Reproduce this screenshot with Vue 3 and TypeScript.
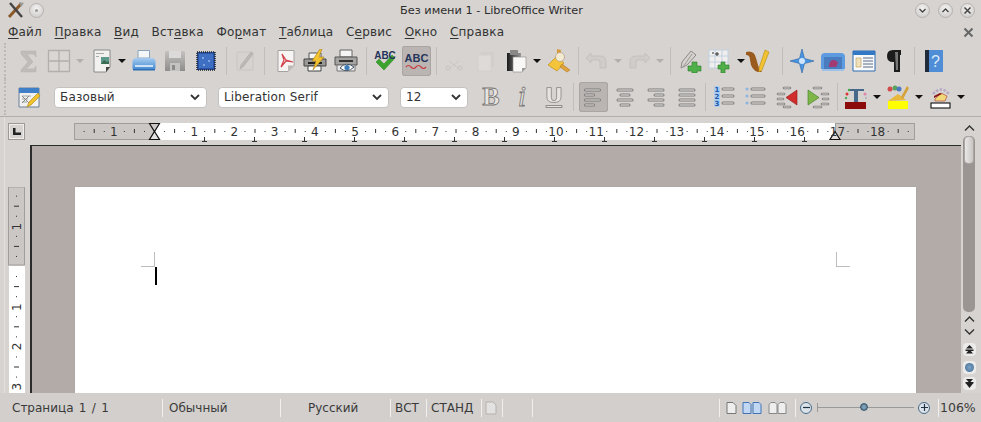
<script setup lang="ts">
interface Item { k: string; c: number; w?: number; n?: string; t?: string; active?: boolean; off?: boolean }
interface Label { x: number; y: number; t: string; c: string }

const icon = (n: string, c: number, extra: Partial<Item> = {}): Item => ({ k: 'icon', n, c, w: 24, ...extra })
const caret = (c: number, off = false): Item => ({ k: 'caret', c, w: 8, off })
const sep = (c: number): Item => ({ k: 'sep', c, w: 1 })
const grip: Item = { k: 'grip', c: 5, w: 3 }

function place(list: Item[]) {
  let right = 0
  return list.map((it) => {
    const w = it.w ?? 24
    const left = it.c - w / 2
    const style = { width: w + 'px', marginLeft: left - right + 'px' }
    right = left + w
    return { ...it, style }
  })
}

const rows = [
  place([
    grip, icon('sigma', 29), icon('table', 59), caret(80, true), icon('doc', 102), caret(122),
    icon('print', 144), icon('save', 175), icon('frame', 206), sep(226), icon('pencil', 245), sep(264),
    icon('pdf', 286), icon('direct', 315), icon('preview', 346), sep(366), icon('spell', 385),
    icon('auto', 416.5, { w: 29, active: true }), sep(436), icon('cut', 454), icon('copy', 486), icon('paste', 517), caret(537),
    icon('brush', 559), sep(578), icon('undo', 596), caret(618, true), icon('redo', 640), caret(660, true), sep(670),
    icon('draw', 690), icon('addtable', 720), caret(741), icon('pen', 758), sep(782), icon('star', 802),
    icon('gallery', 833), icon('data', 864), icon('para', 895), sep(914), icon('help', 934),
  ]),
  place([
    grip, icon('styles', 29),
    { k: 'select', c: 130.5, w: 153, t: 'Базовый' },
    { k: 'select', c: 303.5, w: 171, t: 'Liberation Serif' },
    { k: 'select', c: 434, w: 68, t: '12' },
    icon('bold', 491), icon('italic', 522), icon('under', 554), sep(573),
    icon('left', 593.5, { w: 29, active: true }), icon('center', 625), icon('right', 656), icon('just', 686.5), sep(705),
    icon('num', 724), icon('bul', 755), icon('outdent', 787), icon('indent', 818), sep(837),
    icon('fcolor', 856), caret(877), icon('hl', 898), caret(919), icon('bg', 941), caret(961),
  ]),
]

const iconText: Record<string, Label[]> = {
  spell: [{ x: 12, y: 10, t: 'ABC', c: 'tx-abc' }],
  auto: [{ x: 14.5, y: 13, t: 'ABC', c: 'tx-abc2' }],
  help: [{ x: 13.5, y: 18, t: '?', c: 'tx-q' }],
  bold: [{ x: 12, y: 20, t: 'B', c: 'tx-b' }],
  italic: [{ x: 12, y: 21, t: 'i', c: 'tx-i' }],
  num: [
    { x: 5, y: 7, t: '1', c: 'tx-n' }, { x: 5, y: 14, t: '2', c: 'tx-n' }, { x: 5, y: 21, t: '3', c: 'tx-n' },
  ],
}

const menus = [
  ['', 'Ф', 'айл'], ['', 'П', 'равка'], ['', 'В', 'ид'], ['Вст', 'а', 'вка'], ['Фо', 'р', 'мат'],
  ['', 'Т', 'аблица'], ['С', 'е', 'рвис'], ['', 'О', 'кно'], ['', 'С', 'правка'],
]

const cm = 40.2
const zero = 80
const hLabels: { x: number; t: string }[] = [{ x: zero - cm, t: '1' }]
for (let i = 1; i <= 18; i++) hLabels.push({ x: zero + i * cm, t: String(i) })
const hDots: { x: number; long: boolean }[] = []
for (let i = -2; i <= 19; i++) {
  for (const f of [0.25, 0.5, 0.75]) {
    const x = zero + (i + f) * cm
    if (x > 3 && x < 836) hDots.push({ x, long: f === 0.5 })
  }
}
const tabs: number[] = []
for (let x = zero + 50; x < 740; x += 50) tabs.push(x)

const vZero = 79
const vLabels = [
  { y: vZero - cm + 1, t: '1' }, { y: vZero + cm + 1, t: '1' }, { y: vZero + 2 * cm, t: '2' }, { y: vZero + 3 * cm, t: '3' },
]
const vDots: { y: number; long: boolean }[] = []
for (let i = -2; i <= 3; i++) {
  for (const f of [0.25, 0.5, 0.75]) {
    const y = vZero + (i + f) * cm
    if (y > 3 && y < 206) vDots.push({ y, long: f === 0.5 })
  }
}

const cells = [
  { w: 163, t: 'Страница 1 / 1', cls: 'pl12' },
  { w: 118, t: 'Обычный', cls: 'pl6' },
  { w: 110, t: 'Русский', cls: 'pl27' },
  { w: 36, t: 'ВСТ', cls: 'pl4' },
  { w: 55, t: 'СТАНД', cls: 'pl4' },
]
const cellStyle = (w: number) => ({ width: w + 'px' })
</script>

<template>
  <div class="win">
    <svg class="defs" width="0" height="0" aria-hidden="true">
      <defs>
        <linearGradient id="gBlue" x1="0" y1="0" x2="0" y2="1"><stop offset="0" stop-color="#a8cdf0"/><stop offset="1" stop-color="#3f86d0"/></linearGradient>
        <linearGradient id="gGray" x1="0" y1="0" x2="0" y2="1"><stop offset="0" stop-color="#c4c1bf"/><stop offset="1" stop-color="#8f8d8c"/></linearGradient>
        <linearGradient id="gDark" x1="0" y1="0" x2="1" y2="0"><stop offset="0" stop-color="#1a1a1a"/><stop offset="1" stop-color="#9a9a9a"/></linearGradient>
      </defs>
      <symbol id="sigma" viewBox="0 0 24 24"><path d="M4 2h15v6l-2-3H10l6 8-7 7h8l2-3v6H4v-2l7-8-7-8z" fill="#c0bcba" stroke="#b5b1ae" stroke-width=".5"/></symbol>
      <symbol id="table" viewBox="0 0 24 24"><path d="M1.500 1.500h21v21h-21zM12 1.500v21M1.500 12h21" fill="#d9d6d4" stroke="#b2afad" stroke-width="1.300"/></symbol>
      <symbol id="doc" viewBox="0 0 24 24"><path d="M4 1h16v17l-4 5H4z" fill="#f2f1f0" stroke="#777" stroke-width=".8"/><path d="M16 23v-5h4z" fill="#444"/><path d="M6 4h8v1H6zM6 7h3v1H6z" fill="#aaa"/><rect x="11" y="8" width="8" height="7" fill="#5d9a8c"/><path d="M11 15l3-4 3 2 2-1v3z" fill="#3b6a52"/></symbol>
      <symbol id="print" viewBox="0 0 24 24"><path d="M6 9V1.500h11.500V9z" fill="#f5f6f8" stroke="#8aa3bd"/><path d="M0.500 13q0-4 4-4h15q4 0 4 4v6q0 2-2 2h-19q-2 0-2-2z" fill="url(#gBlue)"/><path d="M3 16h18v2H3z" fill="#cfe2f5"/><path d="M1 20h22v1.500H1z" fill="#2e6db0"/></symbol>
      <symbol id="save" viewBox="0 0 24 24"><path d="M3 2h18l1 1v19H2V3z" fill="url(#gGray)"/><path d="M6 2h12v7H6z" fill="#dcdad8"/><path d="M7 14h10v8H7z" fill="#c5c3c1"/><path d="M9 16h3v5H9z" fill="#8d8b8a"/></symbol>
      <symbol id="frame" viewBox="0 0 24 24"><rect x="3" y="3" width="18" height="18" fill="#2b54a5" stroke="#222" stroke-dasharray="1 1" stroke-width="1.500"/><path d="M5 5h14v14H5z" fill="#3e6fc2"/><path d="M9 8l1 1-1 1-1-1zM15 11l1 1-1 1-1-1zM10 15l1 1-1 1-1-1z" fill="#bcd4f2"/></symbol>
      <symbol id="pencil" viewBox="0 0 24 24"><path d="M4 3h16v18H4z" fill="#d5d2d0" stroke="#c9c6c4"/><path d="M7 20l1-4L18 3l2 2L10 18z" fill="#bcb8b6" stroke="#aeaaa8" stroke-width=".6"/></symbol>
      <symbol id="pdf" viewBox="0 0 24 24"><path d="M4 1.500h16v15l-6 6H4z" fill="#f7f5f4" stroke="#a5a2a0"/><path d="M14 22.500v-6h6z" fill="#bcb9b7"/><path d="M8 5l2 6-3 7 5-6 7 1-7-2z" fill="none" stroke="#d2404a" stroke-width="1.200"/></symbol>
      <symbol id="direct" viewBox="0 0 24 24"><path d="M6 4h12v6H6z" fill="#f5f5f5" stroke="#555"/><path d="M1 10h22v7H1z" fill="#9a9896" stroke="#444"/><path d="M5 13h14v2H5z" fill="#222"/><path d="M5 17h13v5H5z" fill="#fff" stroke="#444"/><path d="M17 0L9 12h4l-3 9 11-13h-5l3-8z" fill="#f4c430" stroke="#a97a10" stroke-width=".6"/></symbol>
      <symbol id="preview" viewBox="0 0 24 24"><path d="M6 1h12v7H6z" fill="#f5f5f5" stroke="#666"/><path d="M1 8h22v8H1z" fill="#a5a3a1" stroke="#555"/><path d="M5 11h14v2H5z" fill="#333"/><path d="M3 16h18v6H3z" fill="#e9e9e9" stroke="#777"/><path d="M6 19q6-7 14-1-7 7-14 1z" fill="#fff" stroke="#456"/><circle cx="13" cy="18.500" r="2.600" fill="#3d7cb5"/></symbol>
      <symbol id="spell" viewBox="0 0 24 24"><path d="M3 13l3-3 5 5 8-9 3 3-11 12z" fill="#3da32f" stroke="#1f7a18" stroke-width=".5"/></symbol>
      <symbol id="auto" viewBox="0 0 29 24"><path d="M4 18q2.500-3 5 0t5 0 5 0 5 0" fill="none" stroke="#c8373c" stroke-width="1.200"/></symbol>
      <symbol id="cut" viewBox="0 0 24 24"><path d="M7 12l9 7M17 12l-9 7" stroke="#cac7c5" fill="none"/><circle cx="6" cy="19" r="2" fill="none" stroke="#c6c3c1"/><circle cx="18" cy="19" r="2" fill="none" stroke="#c6c3c1"/></symbol>
      <symbol id="copy" viewBox="0 0 24 24"><path d="M7 3h13v15H7z" fill="#d1cfcd"/><path d="M4 6h13v16H4z" fill="#dddad8" stroke="#d3d0ce"/></symbol>
      <symbol id="paste" viewBox="0 0 24 24"><path d="M2 4h14v18H2z" fill="url(#gDark)"/><path d="M5 1h8v5H5z" fill="#8a8886"/><path d="M8 8h13v11l-4 4H8z" fill="#f8f7f6" stroke="#8a8886" stroke-width=".6"/><path d="M17 23v-4h4z" fill="#9d9b99"/></symbol>
      <symbol id="brush" viewBox="0 0 24 24"><path d="M10 0l4 1-1 8-3-1z" fill="#d59a3a"/><path d="M1 16l8-8 8 6-7 8z" fill="#f4c43a" stroke="#c08f1a" stroke-width=".7"/><circle cx="13" cy="8" r="4.500" fill="#f3ead2" stroke="#a89070" stroke-width=".6"/><path d="M15 15l8 6-3 2-7-5z" fill="#e0a23a" stroke="#a87516" stroke-width=".5"/></symbol>
      <symbol id="undo" viewBox="0 0 24 24"><path d="M2 9l5-5v3h9q6 0 6 5v7h-6v-6q0-2-2-2H7v3z" fill="#cfccca" stroke="#bdbab8" stroke-width=".7"/></symbol>
      <symbol id="redo" viewBox="0 0 24 24"><path d="M22 9l-5-5v3H8q-6 0-6 5v7h6v-6q0-2 2-2h7v3z" fill="#cfccca" stroke="#bdbab8" stroke-width=".7"/></symbol>
      <symbol id="draw" viewBox="0 0 24 24"><path d="M3 19l1-6 9-11 5 4-9 10z" fill="#d5d2d0" stroke="#8c8987"/><path d="M5 18L14 5" stroke="#9a9795"/><path d="M14 13h5v4h4v5h-4v2h-5v-2h-4v-5h4z" fill="#4fb04a" stroke="#2a7a24" stroke-width=".6"/></symbol>
      <symbol id="addtable" viewBox="0 0 24 24"><path d="M1 1h19v18H1z" fill="#f1efee"/><path d="M1 1h19v18H1zM7 1v18M14 1v18M1 7h19M1 13h19" fill="none" stroke="#c2d0e0"/><path d="M4 4h2M9 3v4M7 5h4" stroke="#333"/><path d="M13 13h4v3h4v4h-4v4h-4v-4h-3v-4h3z" fill="#4fb04a" stroke="#2a7a24" stroke-width=".6"/></symbol>
      <symbol id="pen" viewBox="0 0 24 24"><path d="M0 3q8-2 10 6 2 7 3 10l3 4h-4q-7-2-8-12Q4 6 0 6z" fill="#9a5c1e"/><path d="M13 19L19 1l4 2-7 18-3 2z" fill="#f1c232" stroke="#b68b14" stroke-width=".6"/></symbol>
      <symbol id="star" viewBox="0 0 24 24"><path d="M12 0l2.500 9.500L24 12l-9.500 2.500L12 24l-2.500-9.500L0 12l9.500-2.500z" fill="#4a94e0" stroke="#2a64a8" stroke-width=".6"/><circle cx="12" cy="12" r="3" fill="#cfe5fb"/></symbol>
      <symbol id="gallery" viewBox="0 0 24 24"><path d="M0 8q0-4 4-4h16q4 0 4 4v12H0z" fill="#5d9be0"/><rect x="3" y="8" width="18" height="13" fill="#4a7cc0"/><path d="M8 18q0-7 4-7t5 3l-2 4z" fill="#a23b74"/><path d="M1 20h22v2H1z" fill="#9cc2ea"/></symbol>
      <symbol id="data" viewBox="0 0 24 24"><path d="M1 2h22v20H1z" fill="#f7f9fb" stroke="#2f6ab0"/><path d="M1 2h22v4H1z" fill="#3378c4"/><path d="M4 9h5v9H4z" fill="#f0e0bc" stroke="#c09a50" stroke-width=".6"/><path d="M11 9h10M11 12h10M11 15h10M11 18h10" stroke="#5a6a80"/></symbol>
      <symbol id="para" viewBox="0 0 24 24"><path d="M18 1H10q-6 0-6 6t6 6h1v10h6V6h1z" fill="#1c1c1c"/><path d="M12 3h3v18h-2z" fill="#777"/></symbol>
      <symbol id="help" viewBox="0 0 24 24"><rect x="4" y="1" width="17" height="22" fill="#4f8ed6"/><rect x="3" y="1" width="4" height="22" fill="#1f2a3a"/></symbol>
      <symbol id="styles" viewBox="0 0 24 24"><path d="M2 3h20v19H2z" fill="#f1f0ef" stroke="#6a7f96"/><path d="M2 3h20v5H2z" fill="#3f7fc8"/><path d="M5 11h9M5 14h6M5 17h5" stroke="#9aa" /><path d="M5 11l7 7M12 11l-7 7" stroke="#888"/><path d="M10 22l2-5 9-9 2 3-9 9z" fill="#efc22e" stroke="#a8841a" stroke-width=".6"/></symbol>
      <symbol id="under" viewBox="0 0 24 24"><path d="M4 2h5v11q0 4 3 4t3-4V2h5v11q0 6-8 6t-8-6z" fill="#e6e3e1" stroke="#7a7876" stroke-width=".8" transform="translate(1.400 .8) scale(.88)"/><path d="M4 20.500h16v2H4z" fill="#e6e3e1" stroke="#6c6a68" stroke-width=".7"/></symbol>
      <symbol id="left" viewBox="0 0 29 24"><path d="M6.500 5h14M6.500 10h8M6.500 15h14M6.500 20h8" stroke="#7c7a78" stroke-width="3" stroke-linecap="round"/><path d="M6.500 5h14M6.500 10h8M6.500 15h14M6.500 20h8" stroke="#e4e2e0" stroke-width="1" stroke-linecap="round"/></symbol>
      <symbol id="center" viewBox="0 0 24 24"><path d="M5 5h14M8 10h8M5 15h14M8 20h8" stroke="#7c7a78" stroke-width="3" stroke-linecap="round"/><path d="M5 5h14M8 10h8M5 15h14M8 20h8" stroke="#ecebe9" stroke-width="1" stroke-linecap="round"/></symbol>
      <symbol id="right" viewBox="0 0 24 24"><path d="M5 5h14M11 10h8M5 15h14M11 20h8" stroke="#7c7a78" stroke-width="3" stroke-linecap="round"/><path d="M5 5h14M11 10h8M5 15h14M11 20h8" stroke="#ecebe9" stroke-width="1" stroke-linecap="round"/></symbol>
      <symbol id="just" viewBox="0 0 24 24"><path d="M5 5h14M5 10h14M5 15h14M5 20h14" stroke="#7c7a78" stroke-width="3" stroke-linecap="round"/><path d="M5 5h14M5 10h14M5 15h14M5 20h14" stroke="#ecebe9" stroke-width="1" stroke-linecap="round"/></symbol>
      <symbol id="num" viewBox="0 0 24 24"><rect x="2" y="1" width="6" height="21" rx="2" fill="#a9cbef"/><path d="M11 4h10M11 11h10M11 18h10" stroke="#7c7a78" stroke-width="3" stroke-linecap="round"/><path d="M11 4h10M11 11h10M11 18h10" stroke="#ecebe9" stroke-width="1" stroke-linecap="round"/></symbol>
      <symbol id="bul" viewBox="0 0 24 24"><circle cx="4" cy="4" r="1.600" fill="#8fb6de"/><circle cx="4" cy="11" r="1.600" fill="#8fb6de"/><circle cx="4" cy="18" r="1.600" fill="#8fb6de"/><path d="M9 4h12M9 11h12M9 18h12" stroke="#7c7a78" stroke-width="3" stroke-linecap="round"/><path d="M9 4h12M9 11h12M9 18h12" stroke="#ecebe9" stroke-width="1" stroke-linecap="round"/></symbol>
      <symbol id="outdent" viewBox="0 0 24 24"><path d="M9 3h6M3 9h6M3 14h5M3 19h6M9 22h6" stroke="#7c7a78" stroke-width="2.600" stroke-linecap="round"/><path d="M9 3h6M3 9h6M3 14h5M3 19h6M9 22h6" stroke="#ecebe9" stroke-width=".8" stroke-linecap="round"/><path d="M22 5v15L11 12.500z" fill="#d22d2d" stroke="#8e1a1a" stroke-width=".6"/></symbol>
      <symbol id="indent" viewBox="0 0 24 24"><path d="M8 3h7M16 9h6M17 14h5M16 19h6M8 22h7" stroke="#7c7a78" stroke-width="2.600" stroke-linecap="round"/><path d="M8 3h7M16 9h6M17 14h5M16 19h6M8 22h7" stroke="#ecebe9" stroke-width=".8" stroke-linecap="round"/><path d="M2 5v15l11-7.500z" fill="#7fb64a" stroke="#3d7a1c" stroke-width=".6"/></symbol>
      <symbol id="fcolor" viewBox="0 0 24 24"><path d="M4 4h16v2h-6v11h-4V6H4z" fill="#46688a"/><circle cx="3" cy="9" r="1.500" fill="#d33"/><circle cx="5" cy="5" r="1.200" fill="#4a4"/><circle cx="21" cy="9" r="1.500" fill="#d8a"/><circle cx="22" cy="13" r="1.200" fill="#bbb"/><circle cx="2" cy="13" r="1.200" fill="#5a5"/><rect x="1" y="17" width="21" height="7" fill="#8c0c0c"/></symbol>
      <symbol id="hl" viewBox="0 0 24 24"><circle cx="4" cy="4" r="2.500" fill="#d24a4a"/><circle cx="9" cy="3" r="2.500" fill="#5aa35a"/><circle cx="13" cy="4" r="2.500" fill="#4a7ac0"/><path d="M2 16l10-7 8 6z" fill="#e7b83a"/><path d="M15 12l6-11 2 2-6 11z" fill="#d4a23a"/><rect x="2" y="16" width="20" height="8" fill="#ffff00"/></symbol>
      <symbol id="bg" viewBox="0 0 24 24"><path d="M4 9q8-9 16 0" fill="none" stroke="#b8a8c8" stroke-width="2.500" stroke-dasharray="2.500 1.500"/><path d="M6 14l6-6 6 3-2 5H6z" fill="#f1d878" stroke="#a33" stroke-width=".6"/><path d="M5 11l6-3 2 1-8 4z" fill="#8c1414"/><rect x="2" y="18" width="19" height="5" fill="#fff" stroke="#111" stroke-width="1.100"/></symbol>
    </svg>

    <header class="title">
      <svg class="logo" width="20" height="20" viewBox="0 0 20 20"><path d="M3 17L15 4" stroke="#8a5a2a" stroke-width="3"/><path d="M4 3l12 14" stroke="#444" stroke-width="2.400"/><path d="M13 2l5 1-3 4z" fill="#999"/></svg>
      <span class="round pin"><i class="dot"></i></span>
      <span class="title-text">Без имени 1 - LibreOffice Writer</span>
      <span class="round r1"><svg width="9" height="9" viewBox="0 0 9 9"><path d="M1.500 3l3 3 3-3" fill="none" stroke="#444" stroke-width="1.300"/></svg></span>
      <span class="round r2"><svg width="9" height="9" viewBox="0 0 9 9"><path d="M1.500 6l3-3 3 3" fill="none" stroke="#444" stroke-width="1.300"/></svg></span>
      <span class="round r3"><svg width="9" height="9" viewBox="0 0 9 9"><path d="M1.500 1.500l6 6M7.500 1.500l-6 6" fill="none" stroke="#444" stroke-width="1.500"/></svg></span>
    </header>

    <nav class="menu">
      <span v-for="(m, i) in menus" :key="i" class="mi">{{ m[0] }}<u>{{ m[1] }}</u>{{ m[2] }}</span>
      <svg class="close" width="11" height="11" viewBox="0 0 11 11"><path d="M1.500 1.500l8 8M9.500 1.500l-8 8" stroke="#666" stroke-width="2"/></svg>
    </nav>

    <div v-for="(row, ri) in rows" :key="ri" :class="['toolbar', 't' + (ri + 1)]">
      <span v-for="(it, i) in row" :key="i" :class="['item', it.k, { active: it.active, off: it.off }]" :style="it.style">
        <svg v-if="it.k === 'icon'" class="ic" :width="it.w" height="24">
          <use :href="'#' + it.n" />
          <text v-for="(l, li) in iconText[it.n ?? ''] ?? []" :key="li" :x="l.x" :y="l.y" text-anchor="middle" :class="l.c">{{ l.t }}</text>
        </svg>
        <template v-if="it.k === 'select'">
          <span class="sel-text">{{ it.t }}</span>
          <svg class="chev" width="10" height="7" viewBox="0 0 10 7"><path d="M1 1l4 4 4-4" fill="none" stroke="#333" stroke-width="1.800"/></svg>
        </template>
      </span>
    </div>

    <main class="work">
      <aside class="left">
        <div class="corner"><svg width="8" height="7" viewBox="0 0 8 7"><path d="M0 0h2.500v4.500H8V7H0z" fill="#222"/></svg></div>
        <svg class="vruler" width="17" height="206" font-family="DejaVu Sans" font-size="12" fill="#333">
          <rect x=".5" y="0" width="16" height="78" fill="#cbc7c5" stroke="#a09d9b"/>
          <rect x="1" y="79" width="16" height="127" fill="#fff"/>
          <g v-for="(d, i) in vDots" :key="i">
            <rect :x="d.long ? 6 : 8" :y="d.y" :width="d.long ? 5 : 1" height="1" fill="#333"/>
          </g>
          <text v-for="(l, i) in vLabels" :key="i" text-anchor="middle" :transform="`translate(13 ${l.y}) rotate(-90)`">{{ l.t }}</text>
        </svg>
      </aside>
      <section class="center">
        <div class="hwrap">
          <svg class="hruler" width="841" height="20" font-family="DejaVu Sans" font-size="12" fill="#333">
            <rect x=".5" y=".5" width="80" height="16" fill="#cbc7c5" stroke="#a09d9b"/>
            <rect x="81" y="0" width="680" height="17" fill="#fff"/>
            <rect x="761.500" y=".5" width="79" height="16" fill="#cbc7c5" stroke="#a09d9b"/>
            <path d="M761 8.500l5 8h-10z" fill="#e4e1df" stroke="#111" stroke-width="1.200"/>
            <rect v-for="(d, i) in hDots" :key="'d' + i" :x="d.x" :y="d.long ? 6 : 8" width="1" :height="d.long ? 4 : 1" fill="#333"/>
            <text v-for="l in hLabels" :key="l.x" :x="l.x" y="13" text-anchor="middle">{{ l.t }}</text>
            <path v-for="x in tabs" :key="'t' + x" :d="`M${x + 0.5} 14v4M${x - 2} 18.500h5`" stroke="#333" fill="none"/>
            <path d="M75.500 .5h10L80.500 8.500z" fill="#cbc7c5" stroke="#111" stroke-width="1.200"/>
            <path d="M80.500 8.500l5 8h-10z" fill="#e4e1df" stroke="#111" stroke-width="1.200"/>
          </svg>
        </div>
        <div class="doc">
          <div class="page">
            <i class="crop c1v"></i><i class="crop c1h"></i>
            <i class="crop c2v"></i><i class="crop c2h"></i>
            <i class="cursor"></i>
          </div>
        </div>
      </section>
      <aside class="scroll">
        <svg class="sarrow first" width="11" height="8" viewBox="0 0 11 8"><path d="M1 6.500l4.500-4.500 4.500 4.500" fill="none" stroke="#333" stroke-width="1.400"/></svg>
        <div class="trough"><div class="thumb"></div></div>
        <svg class="sarrow up" width="11" height="8" viewBox="0 0 11 8"><path d="M1 6.500l4.500-4.500 4.500 4.500" fill="none" stroke="#333" stroke-width="1.400"/></svg>
        <svg class="sarrow down" width="11" height="8" viewBox="0 0 11 8"><path d="M1 1.500l4.500 4.500 4.500-4.500" fill="none" stroke="#333" stroke-width="1.400"/></svg>
        <span class="pill p1"><svg width="9" height="9" viewBox="0 0 9 9"><path d="M4.500 0l3.500 3.500H1zM.5 4.500h8V6h-8zM4.500 4.500l3.500 4H1z" fill="#222"/></svg></span>
        <span class="pill p2"><i class="ball"></i></span>
        <span class="pill p3"><svg width="9" height="9" viewBox="0 0 9 9"><path d="M1 0h7L4.500 4zM.5 3h8v1.500h-8zM1 4.500h7L4.500 9z" fill="#222"/></svg></span>
      </aside>
    </main>

    <footer class="status">
      <span v-for="c in cells" :key="c.t" :class="['cell', c.cls]" :style="cellStyle(c.w)">{{ c.t }}</span>
      <span class="cell c-doc">
        <svg width="12" height="14" viewBox="0 0 12 14"><path d="M1 1h7l3 3v9H1z" fill="#e4e2e0" stroke="#b5b2b0"/></svg>
      </span>
      <span class="cell c-a"></span>
      <span class="cell c-b"></span>
      <span class="cell c-views">
        <svg width="13" height="14" viewBox="0 0 13 14"><path d="M2 1.500h6l3 3v8H2z" fill="#eee" stroke="#777"/></svg>
        <svg width="20" height="14" viewBox="0 0 20 14"><path d="M1 1.500h6l2 2v9H1zM11 1.500h6l2 2v9h-8z" fill="#c2d8f2" stroke="#3f74b8"/></svg>
        <svg class="v3" width="19" height="14" viewBox="0 0 19 14"><path d="M9 3.500l-2-2H3l-2 2v9h8zM10 3.500l2-2h4l2 2v9h-8z" fill="#eee" stroke="#888"/></svg>
      </span>
      <span class="cell c-zoom">
        <span class="zb"><svg width="7" height="7" viewBox="0 0 7 7"><path d="M0 3.500h7" stroke="#234" stroke-width="1.200"/></svg></span>
        <span class="slider"><i class="knob"></i></span>
        <span class="zb"><svg width="7" height="7" viewBox="0 0 7 7"><path d="M0 3.500h7M3.500 0v7" stroke="#234" stroke-width="1.200"/></svg></span>
      </span>
      <span class="cell c-pct">106%</span>
    </footer>
  </div>
</template>

<style>
html, body { margin: 0; background: #d5d2d0; }
</style>

<style scoped>
.win {
  width: 981px;
  height: 422px;
  overflow: hidden;
  display: flex;
  flex-direction: column;
  background: #d6d3d1;
  font-family: "DejaVu Sans", sans-serif;
  font-size: 12px;
  color: #333;
}
.defs { position: absolute; }

.title { height: 20px; display: flex; align-items: center; flex: none; }
.logo { margin-left: 6px; }
.round {
  width: 15px; height: 15px; border-radius: 50%;
  background: radial-gradient(circle at 50% 35%, #f4f3f2, #c9c6c4);
  border: 1px solid #b5b2b0;
  display: flex; align-items: center; justify-content: center; box-sizing: border-box; flex: none;
}
.pin { margin-left: 3px; }
.dot { width: 3px; height: 3px; border-radius: 50%; background: #999; }
.title-text { margin-left: 356px; width: 182px; white-space: nowrap; font-size: 11.3px; color: #2d2d2d; margin-right: 333px; flex: none; }
.r2 { margin-left: 8px; }
.r3 { margin-left: 7px; }

.menu { height: 23px; display: flex; align-items: center; padding-left: 8px; flex: none; position: relative; color: #333; }
.mi { margin-right: 12.6px; white-space: nowrap; letter-spacing: .2px; }
.mi u { text-underline-offset: 2px; }
.close { position: absolute; right: 7px; top: 7px; }

.toolbar { display: flex; align-items: center; flex: none; height: 36px; }
.t2 { height: 38px; padding-bottom: 1px; border-bottom: 1px solid #b0adab; box-sizing: border-box; }
.item { flex: none; display: flex; align-items: center; justify-content: center; }
.ic { overflow: visible; }
.item.grip { align-self: stretch; border-left: 2px dotted #bdbab8; box-sizing: border-box; }
.item.sep { height: 28px; background: #c0bdbb; }
.item.caret { height: 0; border-top: 4px solid #111; border-left: 4px solid transparent; border-right: 4px solid transparent; box-sizing: border-box; }
.item.caret.off { border-top-color: #b2afad; }
.item.active { background: #bab5b3; height: 30px; border-radius: 3px; box-shadow: inset 0 0 0 1px #aaa5a3; }
.item.select {
  height: 21px; background: #fff; border: 1px solid #c4c1bf; border-radius: 4px; box-sizing: border-box;
  justify-content: space-between; padding: 0 6px 0 5px; color: #333;
}
.sel-text { white-space: nowrap; letter-spacing: .15px; }

.tx-abc { font-family: "Liberation Sans", sans-serif; font-size: 10px; font-weight: 700; fill: #24345a; }
.tx-abc2 { font-family: "Liberation Sans", sans-serif; font-size: 11px; font-weight: 700; fill: #24345a; }
.tx-q { font-family: "Liberation Sans", sans-serif; font-size: 16px; fill: #dceaf9; }
.tx-b { font-family: "Liberation Serif", serif; font-size: 26px; font-weight: 700; fill: #e6e3e1; stroke: #767472; stroke-width: .8px; }
.tx-i { font-family: "Liberation Serif", serif; font-size: 30px; font-style: italic; fill: #e6e3e1; stroke: #767472; stroke-width: .8px; }
.tx-n { font-family: "DejaVu Sans", sans-serif; font-size: 7px; font-weight: 700; fill: #2158a8; }

.work { flex: 1; min-height: 0; display: flex; }
.left {
  width: 30px; flex: none; padding-left: 8px; box-sizing: border-box;
  background: linear-gradient(#e3e1df, #e3e1df) 4px 0 / 1px 100% no-repeat;
}
.corner {
  width: 17px; height: 17px; margin-top: 6px; box-sizing: border-box;
  border: 1px solid #9c9997; outline: 1px solid #efeeed; outline-offset: -2px;
  display: flex; align-items: center; justify-content: center;
}
.vruler { display: block; margin-top: 47px; }
.center { width: 931px; flex: none; display: flex; flex-direction: column; min-height: 0; }
.hwrap { height: 28px; padding: 6px 0 0 44px; box-sizing: border-box; flex: none; }
.hruler { display: block; }
.doc {
  flex: 1; min-height: 0; background: #b3aba8; border-top: 1px solid #2b2b2b; border-left: 2px solid #2b2b2b;
  padding: 41px 0 0 43px; box-sizing: border-box; overflow: hidden;
}
.page { width: 841px; height: 260px; background: #fff; position: relative; box-shadow: 0 0 1px #98928f; }
.crop { position: absolute; background: #bdbdbd; }
.c1v { left: 79px; top: 65px; width: 1px; height: 14px; }
.c1h { left: 66px; top: 79px; width: 14px; height: 1px; }
.c2v { left: 761px; top: 65px; width: 1px; height: 14px; }
.c2h { left: 761px; top: 79px; width: 14px; height: 1px; }
.cursor { position: absolute; left: 80px; top: 80px; width: 2px; height: 18px; background: #000; }

.scroll { width: 20px; flex: none; display: flex; flex-direction: column; align-items: flex-start; padding-left: 2px; box-sizing: border-box; }
.sarrow { display: block; flex: none; margin-left: 1px; }
.sarrow.first { margin-top: 7px; }
.sarrow.up { margin-top: 3px; }
.sarrow.down { margin-top: 5px; }
.trough { width: 12px; height: 176px; margin-top: 4px; background: #9a9593; border-radius: 5px; flex: none; }
.thumb { width: 10px; height: 28px; margin-left: 1px; border-radius: 4px; background: linear-gradient(90deg, #e9e7e6, #c9c6c4); border: 1px solid #a8a5a3; box-sizing: border-box; }
.pill {
  width: 13px; height: 13px; border-radius: 4px; background: #ecebea;
  display: flex; align-items: center; justify-content: center; flex: none;
}
.p1 { margin-top: 7px; }
.p2 { margin-top: 5px; }
.p3 { margin-top: 3px; }
.ball { width: 9px; height: 9px; border-radius: 50%; background: radial-gradient(circle, #7ea3c4, #3f6c94); }

.status { height: 29px; flex: none; display: flex; align-items: center; background: #d2cfcd; }
.cell {
  flex: none; height: 18px; line-height: 18px; box-sizing: border-box; white-space: nowrap;
  border-right: 1px solid #f1f0ef; color: #3a3a3a; word-spacing: 1.5px;
  display: flex; align-items: center;
}
.pl12 { padding-left: 12px; }
.pl6 { padding-left: 6px; }
.pl27 { padding-left: 27px; }
.pl4 { padding-left: 4px; }
.c-doc { width: 21px; padding-left: 3px; }
.c-a { width: 30px; }
.c-b { width: 187px; }
.c-views { width: 76px; padding-left: 5px; gap: 4px; }
.v3 { margin-left: 2px; }
.c-zoom { width: 143px; padding-left: 4px; }
.c-pct { padding-left: 1px; border-right: 0; font-size: 12.5px; }
.zb {
  width: 12px; height: 12px; border-radius: 50%; box-sizing: border-box;
  border: 1px solid #4a6a85; background: #dbe3ea;
  display: flex; align-items: center; justify-content: center; flex: none;
}
.slider {
  width: 97px; height: 9px; margin: 0 4px 0 5px; flex: none; position: relative;
  background: linear-gradient(#999, #999) left center / 100% 1px no-repeat;
  border-left: 1px solid #999; box-sizing: border-box;
}
.knob { position: absolute; left: 42px; top: 0; width: 8px; height: 8px; border-radius: 50%; background: radial-gradient(circle, #8fb0c8, #45687f); border: 1px solid #3d5a70; box-sizing: border-box; }
</style>
